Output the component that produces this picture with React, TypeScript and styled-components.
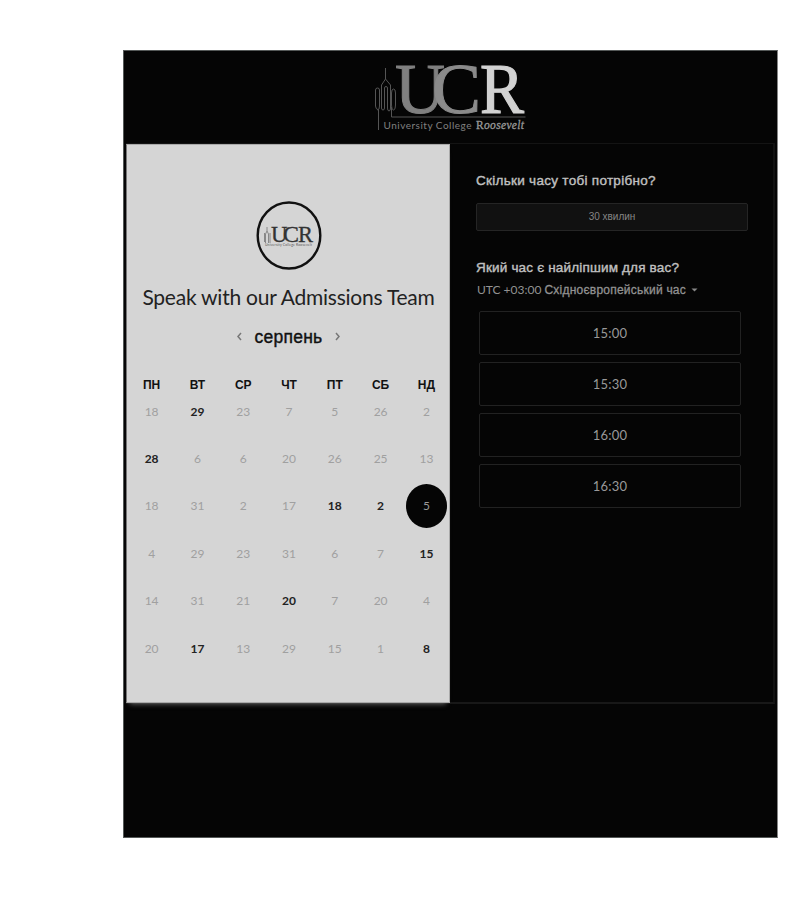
import React from "react";
import styled, { createGlobalStyle, css } from "styled-components";

const GlobalStyle = createGlobalStyle`
  * { box-sizing: border-box; }
  body { margin: 0; background: #fff; font-family: Lato, "Liberation Sans", sans-serif; }
`;

const Page = styled.div`
  width: 800px;
  height: 900px;
  padding: 50px 0 0 123px;
  overflow: hidden;
`;

const Frame = styled.main`
  width: 655px;
  height: 788px;
  background: #050505;
  border: 1px solid #555958;
  border-right-color: #858585;
`;

const Header = styled.header`
  height: 92px;
  padding: 8px 0 0 250px;
`;

const Card = styled.div`
  display: flex;
  width: 649px;
  height: 561px;
  margin-left: 2px;
  border: 1px solid #141414;
  border-left: 0;
  border-bottom: 2px solid #181818;
  border-right: 2px solid #111;
`;

const CalendarPane = styled.section`
  display: flex;
  flex-direction: column;
  align-items: center;
  width: 324px;
  height: 559px;
  flex: none;
  padding: 56px 0 0 1px;
  background: #d5d5d5;
  border: 1px solid #aaa;
  border-left-color: #777;
  box-shadow: 0 5px 5px -4px #666;
`;

const Title = styled.h1`
  margin: 11px 0 0;
  font: 400 21px/30px Lato, sans-serif;
  letter-spacing: -0.23px;
  color: #222;
  white-space: nowrap;
`;

const MonthNav = styled.nav`
  display: flex;
  align-items: center;
  gap: 12px;
  height: 30px;
  margin-top: 10px;
  color: #666;
`;

const Month = styled.span`
  font: 400 17.5px/30px "Liberation Sans", sans-serif;
  letter-spacing: 0.25px;
  color: #111;
  -webkit-text-stroke: 0.4px #111;
`;

const Grid = styled.div`
  display: grid;
  grid-template-columns: repeat(7, 45.8px);
  justify-items: center;
`;

const WeekGrid = styled(Grid)`
  margin-top: 23px;
  padding-left: 1px;
  font: 700 12px/20px "Liberation Sans", sans-serif;
  color: #111;
`;

const DayGrid = styled(Grid)`
  margin-top: -7px;
  padding-left: 1px;
  grid-auto-rows: 47.4px;
  align-items: center;
`;

const Day = styled.span<{ $state: "off" | "open" | "chosen" }>`
  display: flex;
  align-items: center;
  justify-content: center;
  width: 41px;
  height: 44px;
  border-radius: 50%;
  font: 400 12px/16px Lato, sans-serif;
  color: #a0a0a0;
  ${(p) => p.$state === "open" && css`color: #222; font-weight: 700;`}
  ${(p) => p.$state === "chosen" && css`color: #999; background: #050505;`}
`;

const TimePane = styled.section`
  flex: 1;
  padding: 27px 0 0 26px;
`;

const Question = styled.h2<{ $tracking: number }>`
  margin: 0;
  font: 400 13.5px/20px "Liberation Sans", sans-serif;
  letter-spacing: ${(p) => p.$tracking}px;
  color: #c0c0c0;
  -webkit-text-stroke: 0.4px #c0c0c0;
  white-space: nowrap;
`;

const Duration = styled.button`
  display: block;
  width: 272px;
  height: 28px;
  margin: 12px 0 27px;
  padding: 0;
  background: #111;
  border: 1px solid #252525;
  border-radius: 2px;
  font: 400 10px/26px "Liberation Sans", sans-serif;
  color: #858585;
`;

const Zone = styled.div`
  display: flex;
  align-items: center;
  height: 24px;
  padding-left: 1px;
  font: 400 12px/24px Lato, sans-serif;
  color: #929292;
  white-space: nowrap;
`;

const ZoneName = styled.span`
  margin: 0 5px 0 3px;
  font: 400 12px/24px "Liberation Sans", sans-serif;
  letter-spacing: 0.23px;
  -webkit-text-stroke: 0.3px #929292;
`;

const Slots = styled.div`
  display: flex;
  flex-direction: column;
  gap: 7px;
  padding: 9px 0 0 3px;
`;

const Slot = styled.button`
  width: 262px;
  height: 44px;
  padding: 0;
  background: transparent;
  border: 1px solid #222;
  border-radius: 2px;
  font: 400 13px/40px Lato, sans-serif;
  letter-spacing: 0.2px;
  color: #999;
`;

const Tower = ({ color }: { color: string }) => (
  <g fill="none" stroke={color} strokeWidth="1">
    <path d="M11.5 9v11l-4 6v23q0 2 1.500 2t1.500-2v-20q0-1.500 1.500-1.500t1.500 1.500v20q0 3 1.500 3t1.500-3v-23l-5-6" />
    <path d="M4.500 71V51q-3-1-3-4V31q0-2 2-2t2 2v16q0 4-2 4M17.500 34q0-4 2-4t2 4v12q0 5-2 5t-2-5v-12M17.500 48v10h134" />
  </g>
);

const HeaderLogo = () => (
  <svg width="160" height="82" viewBox="0 0 160 82" role="img" aria-label="University College Roosevelt">
    <Tower color="#555" />
    <g fontFamily="Liberation Serif" fontSize="72">
      <text x="21" y="54" fill="#808080" stroke="#808080" strokeWidth="1" textLength="50" lengthAdjust="spacingAndGlyphs">U</text>
      <text x="58" y="54" fill="#8b8b8b" stroke="#8b8b8b" strokeWidth="1" textLength="49" lengthAdjust="spacingAndGlyphs">C</text>
      <text x="106" y="54" fill="#d2d2d2" stroke="#d2d2d2" strokeWidth="1.200" textLength="44" lengthAdjust="spacingAndGlyphs">R</text>
    </g>
    <text x="9.500" y="70" fontFamily="Lato" fontSize="10" fill="#808080" textLength="88">University College</text>
    <text x="102" y="70" fontFamily="Liberation Serif" fontSize="11.500" fill="#999" stroke="#999" strokeWidth="0.300" textLength="48">
      R<tspan fontStyle="italic">oosevelt</tspan>
    </text>
  </svg>
);

const RoundLogo = () => (
  <svg width="68" height="70" viewBox="0 0 68 70" role="img" aria-label="UCR">
    <ellipse cx="34" cy="34.500" rx="31.300" ry="33" fill="none" stroke="#111" strokeWidth="2.400" />
    <g fill="none" stroke="#888" strokeWidth="1">
      <path d="M12 26v4l-1.500 3v9M12 30l1.500 3v9M9.500 32v9M15 32v10" />
    </g>
    <g fontFamily="Liberation Serif" fontSize="24" fill="#333" stroke="#333" strokeWidth="0.300">
      <text x="16" y="41" textLength="16.500" lengthAdjust="spacingAndGlyphs">U</text>
      <text x="28" y="41" textLength="16" lengthAdjust="spacingAndGlyphs">C</text>
      <text x="43" y="41" textLength="15" lengthAdjust="spacingAndGlyphs">R</text>
    </g>
    <text x="10" y="45" fontFamily="Lato" fontSize="3.400" fill="#555" textLength="47">University College Roosevelt</text>
  </svg>
);

const Chevron = ({ d }: { d: string }) => (
  <svg width="7" height="10" viewBox="0 0 7 10" fill="none" stroke="#777" strokeWidth="1.500">
    <path d={d} />
  </svg>
);

const weekdays = ["ПН", "ВТ", "СР", "ЧТ", "ПТ", "СБ", "НД"];
const days = [
  [18, 29, 23, 7, 5, 26, 2],
  [28, 6, 6, 20, 26, 25, 13],
  [18, 31, 2, 17, 18, 2, 5],
  [4, 29, 23, 31, 6, 7, 15],
  [14, 31, 21, 20, 7, 20, 4],
  [20, 17, 13, 29, 15, 1, 8],
].flat();
const openDays = new Set([1, 7, 18, 19, 27, 31, 36, 41]);
const chosenDay = 20;
const times = ["15:00", "15:30", "16:00", "16:30"];

export default function App() {
  return (
    <>
      <GlobalStyle />
      <Page>
        <Frame>
          <Header>
            <HeaderLogo />
          </Header>
          <Card>
            <CalendarPane>
              <RoundLogo />
              <Title>Speak with our Admissions Team</Title>
              <MonthNav>
                <Chevron d="M5 1 2 4.500l3 3.500" />
                <Month>серпень</Month>
                <Chevron d="M2 1 5 4.500 2 8" />
              </MonthNav>
              <WeekGrid>
                {weekdays.map((d) => (
                  <span key={d}>{d}</span>
                ))}
              </WeekGrid>
              <DayGrid>
                {days.map((d, i) => (
                  <Day key={i} $state={i === chosenDay ? "chosen" : openDays.has(i) ? "open" : "off"}>
                    {d}
                  </Day>
                ))}
              </DayGrid>
            </CalendarPane>
            <TimePane>
              <Question $tracking={0.29}>Скільки часу тобі потрібно?</Question>
              <Duration>30 хвилин</Duration>
              <Question $tracking={0.18}>Який час є найліпшим для вас?</Question>
              <Zone>
                UTC +03:00 <ZoneName>Східноєвропейський час</ZoneName>
                <svg width="7" height="4" viewBox="0 0 7 4">
                  <path d="M.5.5h6l-3 3z" fill="#888" />
                </svg>
              </Zone>
              <Slots>
                {times.map((t) => (
                  <Slot key={t}>{t}</Slot>
                ))}
              </Slots>
            </TimePane>
          </Card>
        </Frame>
      </Page>
    </>
  );
}
